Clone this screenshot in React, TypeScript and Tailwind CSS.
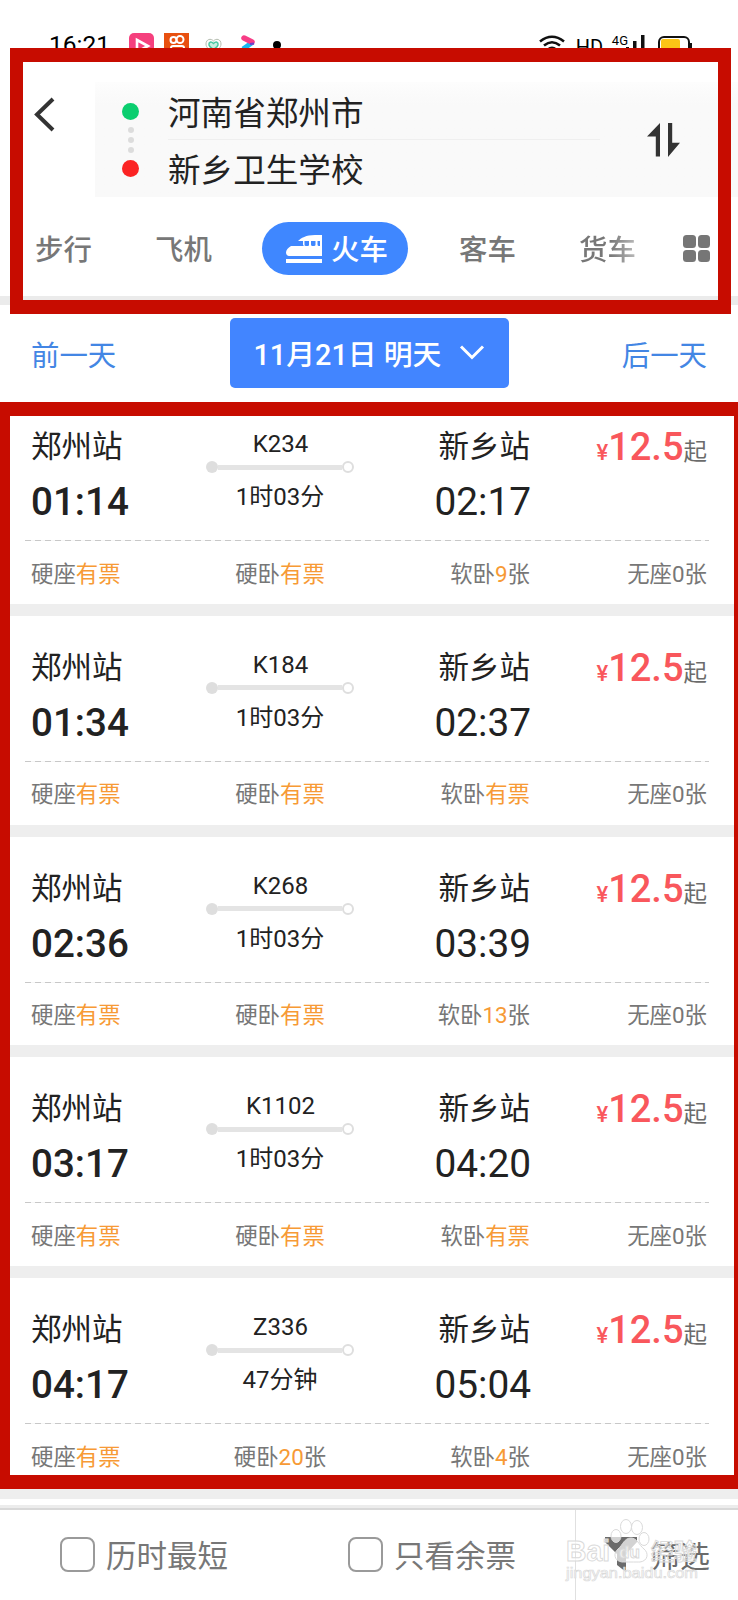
import React from 'react';

interface Seat {
  label: string;
  count: string;
  unit?: string;
}

interface Train {
  code: string;
  depart: string;
  arrive: string;
  duration: string;
  seats: Seat[];
}

const YES = '有票';

const TRAINS: Train[] = [
  {
    code: 'K234', depart: '01:14', arrive: '02:17', duration: '1时03分',
    seats: [{ label: '硬座', count: YES }, { label: '硬卧', count: YES }, { label: '软卧', count: '9', unit: '张' }],
  },
  {
    code: 'K184', depart: '01:34', arrive: '02:37', duration: '1时03分',
    seats: [{ label: '硬座', count: YES }, { label: '硬卧', count: YES }, { label: '软卧', count: YES }],
  },
  {
    code: 'K268', depart: '02:36', arrive: '03:39', duration: '1时03分',
    seats: [{ label: '硬座', count: YES }, { label: '硬卧', count: YES }, { label: '软卧', count: '13', unit: '张' }],
  },
  {
    code: 'K1102', depart: '03:17', arrive: '04:20', duration: '1时03分',
    seats: [{ label: '硬座', count: YES }, { label: '硬卧', count: YES }, { label: '软卧', count: YES }],
  },
  {
    code: 'Z336', depart: '04:17', arrive: '05:04', duration: '47分钟',
    seats: [{ label: '硬座', count: YES }, { label: '硬卧', count: '20', unit: '张' }, { label: '软卧', count: '4', unit: '张' }],
  },
];

const StatusBar = () => (
  <div className="flex h-[62px] items-start justify-between pl-[49px] pr-[45px] pt-[33px] text-black">
    <div className="flex items-start">
      <span className="w-[80px] pt-px text-[24.500px] leading-[22px]">16:21</span>
      <svg width="26" height="26" viewBox="0 0 26 26">
        <rect width="25" height="25" rx="5" fill="#f5407d" />
        <path d="M8 7 L19 13 L8 19 Z" fill="none" stroke="#fff" strokeWidth="2.6" />
      </svg>
      <svg className="ml-[9px]" width="26" height="26" viewBox="0 0 26 26">
        <rect width="25" height="25" fill="#e8500f" />
        <g fill="none" stroke="#fff" strokeWidth="2">
          <circle cx="9.500" cy="7" r="3" />
          <circle cx="16" cy="6.500" r="3.500" />
          <rect x="7" y="13" width="13" height="8" rx="2" />
          <path d="M11 15v4" />
        </g>
      </svg>
      <svg className="ml-[15px] mt-[5px]" width="17" height="16" viewBox="0 0 17 16" fill="none">
        <path d="M8.500 3C6 0 1 1 1 6c0 4 4 6 7.500 8.500C12 12 16 10 16 6c0-5-5-6-7.500-3Z" stroke="#b5bdb0" />
        <path d="M8.500 5.500C6 3 3.500 4 4 7c.5 2 2.500 3 4.500 4.500C10.500 10 12.500 9 13 7c.5-3-2-4-4.500-1.500Z" fill="#c9f0e2" stroke="#4cc9a4" strokeWidth="1.500" />
      </svg>
      <svg className="ml-[19px] mt-[2px]" width="16" height="16" viewBox="0 0 16 16" fill="none">
        <path d="M12 7 L2 14" stroke="#19b9f0" strokeWidth="5" />
        <path d="M3 3 L11 7" stroke="#f73c86" strokeWidth="5.500" strokeLinecap="round" />
        <path d="M9 9 L13 8.500" stroke="#6a3fd0" strokeWidth="2" />
      </svg>
      <span className="ml-[16px] mt-[8px] h-[8px] w-[8px] rounded-full bg-black" />
    </div>
    <div className="flex items-start">
      <svg className="mt-[2px]" width="26" height="20" viewBox="0 0 26 20" fill="none" stroke="#111" strokeWidth="2.600">
        <path d="M1 6.500Q13-3 25 6.500M5 10.500Q13 4 21 10.500M9 14.500Q13 11 17 14.500" />
      </svg>
      <span className="ml-[11px] mt-[3px] w-[28px] text-[20px] leading-[22px]">HD</span>
      <span className="ml-[8px] text-[13px] leading-[15px]">4G</span>
      <svg className="ml-[-2px] mt-[2px]" width="20" height="20" viewBox="0 0 20 20" fill="#111">
        <path d="M0 12h3v8H0zM7 6h3.500v14H7zM15 0h3.500v20H15z" />
      </svg>
      <svg className="ml-[11px] mt-[2px]" width="36" height="20" viewBox="0 0 36 20">
        <rect x="2" y="2" width="30" height="16" rx="5" fill="#fff" stroke="#111" strokeWidth="2" />
        <rect x="4" y="4" width="19" height="13" rx="2" fill="#fcc416" />
        <path d="M34 8v7" stroke="#111" strokeWidth="2" />
      </svg>
    </div>
  </div>
);

const TrainIcon = () => (
  <svg width="36" height="28" viewBox="0 0 36 28" fill="#fff">
    <path
      fillRule="evenodd"
      d="M36 0H29C20 0 15 3 12 6H17V9.500Q17 11 19 11H5C2 13 0 15 0 17.500C0 20 1.500 21 4 21H36ZM18.500 6V9.500Q18.500 11 20 11H22Q23 11 23 9.500V6ZM25 6V9.500Q25 11 26.500 11H28Q29.500 11 29.500 9.500V6ZM31.500 6V9.500Q31.500 11 33 11H34V6Z"
    />
    <path d="M0 24h36v4H0z" />
  </svg>
);

const SearchHeader = () => (
  <div className="h-[243px] border-b-[9px] border-[#ebebeb] bg-white">
    <div className="flex pt-5">
      <div className="w-[95px] pl-[33px] pt-[15px]">
        <svg width="24" height="36" viewBox="0 0 24 36" fill="none" stroke="#333" strokeWidth="4">
          <path d="M20 2 L4 17.500 L20 33" />
        </svg>
      </div>
      <div className="flex h-[115px] flex-1 items-center bg-gradient-to-b from-[#fdfdfd] to-[#f9f9f9] to-20%">
        <div className="ml-[27px] flex w-[17px] flex-col items-center">
          <span className="h-[17px] w-[17px] rounded-full bg-[#0bce6f]" />
          <span className="mt-[7px] h-[6px] w-[6px] rounded-full bg-[#dcdcdc]" />
          <span className="mt-1 h-[6px] w-[6px] rounded-full bg-[#dcdcdc]" />
          <span className="mt-1 h-[6px] w-[6px] rounded-full bg-[#dcdcdc]" />
          <span className="mt-[7px] h-[17px] w-[17px] rounded-full bg-[#fb2323]" />
        </div>
        <div className="ml-[29px] w-[432px] text-[32.600px] text-[#222]">
          <div className="h-[57px] border-b border-[#efefef] leading-[62px]">河南省郑州市</div>
          <div className="h-[57px] leading-[62px]">新乡卫生学校</div>
        </div>
        <svg className="ml-[47px]" width="34" height="34" viewBox="0 0 34 34" fill="#333">
          <path d="M13 0v33.500H8.800V13.500H0ZM21 0v34L33 19.800h-7.800V0Z" />
        </svg>
      </div>
    </div>
    <div className="mt-[25px] flex h-[53px] items-center text-[28.400px] font-medium leading-[42px] text-[#777]">
      <span className="ml-[35px] w-[120px] pt-[5px]">步行</span>
      <span className="w-[107px] pt-[5px]">飞机</span>
      <div className="flex h-[53px] w-[146px] items-center rounded-full bg-[#3f87ff] pl-[24px] text-white">
        <TrainIcon />
        <span className="ml-[9px] pt-[5px]">火车</span>
      </div>
      <span className="ml-[51px] w-[120px] pt-[5px]">客车</span>
      <span className="w-[104px] bg-gradient-to-r from-[#777] from-30% to-[#bbb] to-55% bg-clip-text pt-[5px] text-transparent">货车</span>
      <span className="grid grid-cols-2 gap-[2px]">
        {[0, 1, 2, 3].map((i) => (
          <span key={i} className="h-[12.500px] w-[12.500px] rounded-[3.500px] bg-[#767676]" />
        ))}
      </span>
    </div>
  </div>
);

const DateBar = () => (
  <div className="flex h-[90px] items-start justify-between bg-white px-[31px] pt-[13px] text-[28.400px] text-[#4386e4]">
    <span className="w-[198px] leading-[77px]">前一天</span>
    <div className="flex h-[70px] w-[279px] items-center rounded-[5px] bg-[#4285ff] pl-[24px] font-medium text-white">
      <span className="w-[205px] whitespace-nowrap pt-[4px] text-[28.800px] leading-[40px]">11月21日 明天</span>
      <svg width="26" height="18" viewBox="0 0 26 18" fill="none" stroke="#fff" strokeWidth="3">
        <path d="M2 2.500 L13 13.500 L24 2.500" />
      </svg>
    </div>
    <span className="w-[198px] text-right leading-[77px]">后一天</span>
  </div>
);

const SeatCell = ({ seat }: { seat: Seat }) => (
  <span className="whitespace-nowrap">
    {seat.label}
    <span className="text-[#f79a35]">{seat.count}</span>
    {seat.unit}
  </span>
);

const TrainCard = ({ train }: { train: Train }) => (
  <div className="h-[220.800px] border-b-[12px] border-[#eeeeee] bg-white pl-[25px] pr-[29px] text-[#222]">
    <div className="flex h-[145px] pl-[6px] pr-[2px]">
      <div className="w-[181px] pt-[29px]">
        <div className="text-[30.500px] leading-[46px]">郑州站</div>
        <div className="mt-[9px] text-[38.600px] font-medium leading-[46px]">{train.depart}</div>
      </div>
      <div className="flex w-[136px] flex-col items-center pt-[33px] text-[24px]">
        <div className="pl-px leading-[32px]">{train.code}</div>
        <div className="mt-px flex w-[148px] items-center">
          <span className="h-[12px] w-[12px] rounded-full bg-[#dedede]" />
          <span className="h-[5px] flex-1 bg-[#e4e4e4]" />
          <span className="h-[12px] w-[12px] rounded-full border-[2.500px] border-[#dedede] bg-white" />
        </div>
        <div className="mt-[8px] leading-[32px]">{train.duration}</div>
      </div>
      <div className="flex-1 pt-[29px] text-right">
        <div className="pr-px text-[30.500px] leading-[46px]">新乡站</div>
        <div className="mt-[9px] text-[38.800px] leading-[46px]">{train.arrive}</div>
      </div>
      <div className="flex w-[176px] items-baseline justify-end pt-[29px] leading-[46px]">
        <span className="text-[22px] font-medium text-[#f9575c]">¥</span>
        <span className="text-[38px] font-medium text-[#f9575c]">12.5</span>
        <span className="text-[23.500px] text-[#6b6b6b]">起</span>
      </div>
    </div>
    <div className="h-px bg-[repeating-linear-gradient(90deg,#c8c8c8_0px,#c8c8c8_6px,#f6f6f6_6px,#f6f6f6_10px)]" />
    <div className="flex h-[62px] items-center pl-[6px] pr-[2px] pt-[5px] text-[22.400px] text-[#777]">
      <div className="w-[181px]"><SeatCell seat={train.seats[0]} /></div>
      <div className="flex w-[136px] justify-center"><SeatCell seat={train.seats[1]} /></div>
      <div className="flex-1 pr-px text-right"><SeatCell seat={train.seats[2]} /></div>
      <div className="w-[176px] text-right">无座0张</div>
    </div>
  </div>
);

const CheckOption = ({ label }: { label: string }) => (
  <div className="flex w-[288px] items-center text-[30.500px] leading-[46px] text-[#777]">
    <span className="h-[35px] w-[35px] rounded-[8px] border-2 border-[#9a9a9a]" />
    <span className="ml-[11px] pt-[5px]">{label}</span>
  </div>
);

const Watermark = () => (
  <svg className="absolute left-[560px] top-[1515px]" width="150" height="72" viewBox="0 0 150 72" fill="#fff" fillOpacity="0.7" stroke="#dadada" strokeWidth="1">
    <ellipse cx="56" cy="21" rx="5" ry="6.500" />
    <ellipse cx="66" cy="11.500" rx="5.500" ry="7" />
    <ellipse cx="77" cy="12.500" rx="5.500" ry="7" />
    <ellipse cx="84" cy="24" rx="5" ry="6.500" />
    <path d="M71 23c-7 0-8 7-13 11-5 4-4 12 4 13 4 0 14 0 18 0 8-1 9-9 4-13-5-4-7-11-13-11Z" />
    <text x="6" y="46" fontSize="29" fontWeight="700" fontFamily="Liberation Sans" textLength="44" lengthAdjust="spacingAndGlyphs">Bai</text>
    <text x="59" y="43" fontSize="17" fontWeight="700" fontFamily="Liberation Sans">du</text>
    <text x="91" y="45" fontSize="23" fontWeight="700" fontFamily="Noto Sans CJK SC" fillOpacity="0.4">经验</text>
    <text x="6" y="63" fontSize="15.500" fontFamily="Liberation Sans" strokeWidth="0.700" textLength="132" lengthAdjust="spacingAndGlyphs">jingyan.baidu.com</text>
  </svg>
);

const FilterBar = () => (
  <div className="bg-white">
    <div className="h-[6px]" />
    <div className="h-[5px] border-b-2 border-[#d8d8d8] bg-[#ececec]" />
    <div className="flex h-[90px] items-center pl-[60px]">
      <CheckOption label="历时最短" />
      <CheckOption label="只看余票" />
      <div className="ml-[-61px] flex h-full items-center border-l border-[#e0e0e0] pl-[28px] text-[30px] text-[#6b6b6b]">
        <svg width="34" height="37" viewBox="0 0 34 37" fill="#6b6b6b">
          <path d="M1 1h32v5L22 18v18l-9-7V18L1 6Z" />
        </svg>
        <span className="ml-[12px] pt-[5px] leading-[46px]">筛选</span>
      </div>
    </div>
  </div>
);

export default function App() {
  return (
    <div className="relative h-[1600px] w-[738px] overflow-hidden bg-white font-['Roboto','Noto_Sans_CJK_SC',sans-serif]">
      <StatusBar />
      <SearchHeader />
      <DateBar />
      {TRAINS.map((train) => (
        <TrainCard key={train.code} train={train} />
      ))}
      <FilterBar />
      <Watermark />
      {/* highlight frames */}
      <div className="absolute left-[10px] top-[48px] h-[266px] w-[721px] border-x-[13px] border-y-[14px] border-[#c70c00]" />
      <div className="absolute left-[-4px] top-[402px] h-[1087px] w-[752px] border-[14px] border-[#c70c00]" />
    </div>
  );
}
